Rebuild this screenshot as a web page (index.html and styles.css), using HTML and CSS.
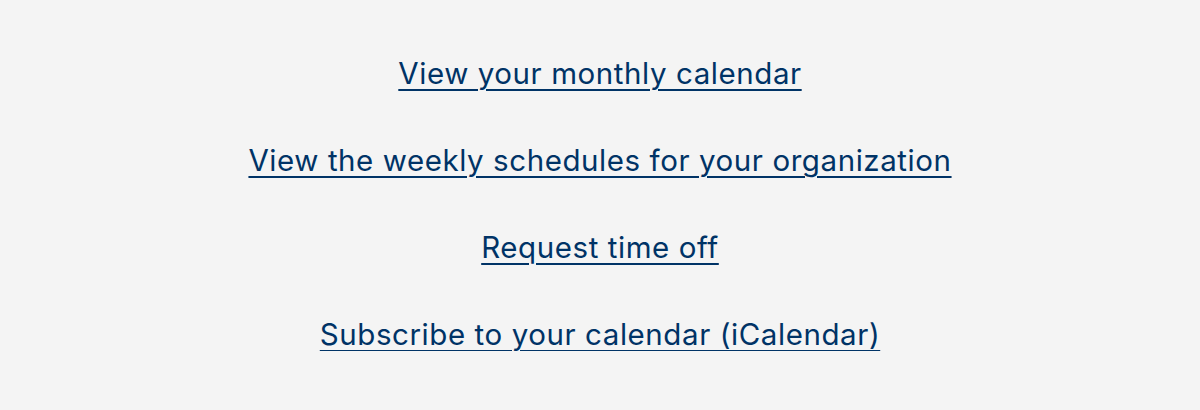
FILE: index.html
```html
<!DOCTYPE html>
<html lang="en">

<head>
    <meta charset="UTF-8">
    <meta name="viewport" content="width=device-width, initial-scale=1.0">
    <title>Schedule</title>
    <link rel="stylesheet" href="styles.css">
</head>

<body>
    <section class="links">
        <a href="#">View your monthly calendar</a>
        <a href="#">View the weekly schedules for your organization</a>
        <a href="#">Request time off</a>
        <a href="#">Subscribe to your calendar (iCalendar)</a>
    </section>
</body>

</html>
```
FILE: styles.css
```css
body {
    font-family: Inter, 'Noto Sans', sans-serif;
    margin: 0;
    padding: 0;
    background-color: #f4f4f4;
}

.links {
    display: flex;
    flex-direction: column;
    align-items: center;
    gap: 53px;
    padding-top: 56px;
}

.links a {
    color: #003366;
    font-size: 29.5px;
    line-height: 34px;
    letter-spacing: 0.57px;
    text-decoration: underline;
    text-decoration-thickness: 2px;
    text-underline-offset: 5px;
}
```
